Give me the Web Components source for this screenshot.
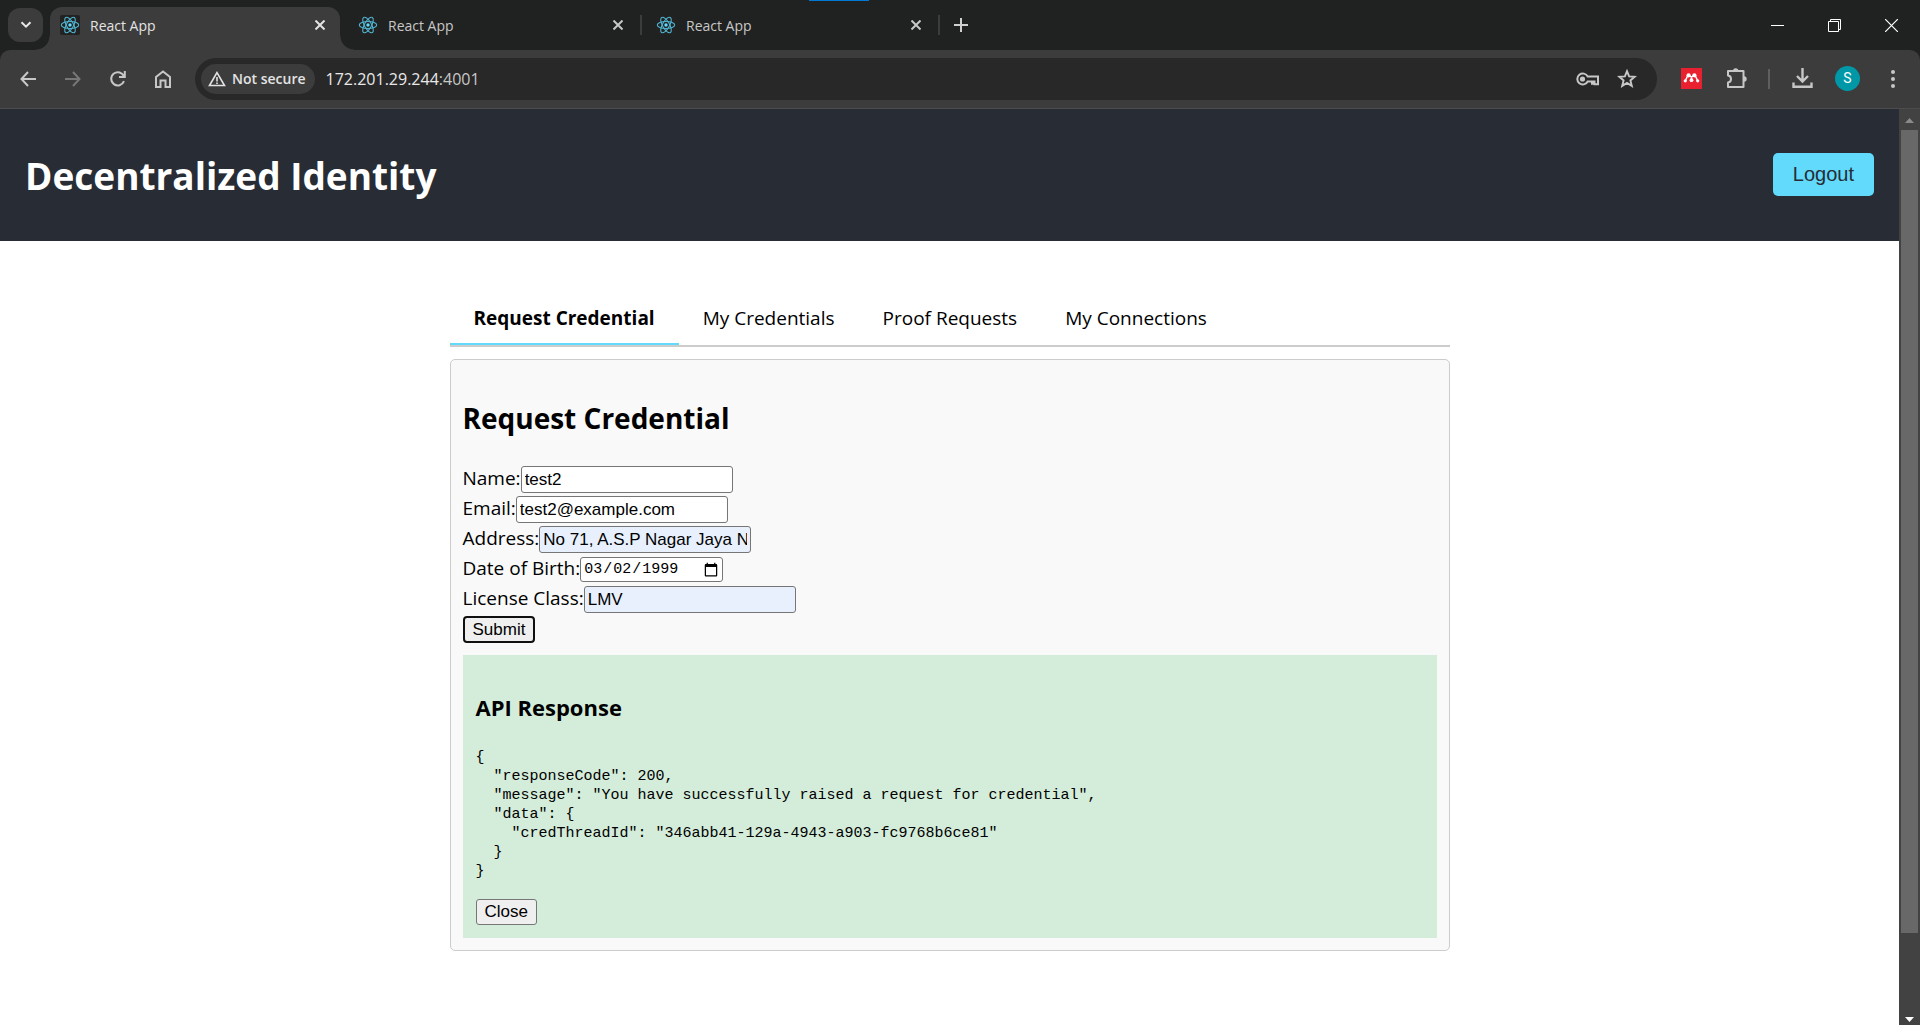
<!DOCTYPE html>
<html lang="en">
<head>
<meta charset="utf-8">
<title>React App</title>
<style>
  html, body { height: 100%; margin: 0; }
  body { background: #fff; font-family: "Open Sans", "Noto Sans", sans-serif; color: #000; }
</style>
</head>
<body>
<browser-window>
  <tab-strip slot="chrome">
    <browser-tab active>React App</browser-tab>
    <browser-tab>React App</browser-tab>
    <browser-tab>React App</browser-tab>
  </tab-strip>
  <browser-toolbar slot="chrome" host="172.201.29.244" port=":4001"></browser-toolbar>
  <site-header>Decentralized Identity</site-header>
  <site-main>
    <tab-bar>
      <tab-item active>Request Credential</tab-item>
      <tab-item>My Credentials</tab-item>
      <tab-item>Proof Requests</tab-item>
      <tab-item>My Connections</tab-item>
    </tab-bar>
    <content-panel heading="Request Credential">
      <credential-form>
        <form-field label="Name:" value="test2"></form-field>
        <form-field label="Email:" type="email" value="test2@example.com"></form-field>
        <form-field label="Address:" value="No 71, A.S.P Nagar Jaya Nagar" autofilled></form-field>
        <form-field label="Date of Birth:" type="date" value="1999-03-02"></form-field>
        <form-field label="License Class:" value="LMV" autofilled></form-field>
      </credential-form>
      <api-response heading="API Response">{
  "responseCode": 200,
  "message": "You have successfully raised a request for credential",
  "data": {
    "credThreadId": "346abb41-129a-4943-a903-fc9768b6ce81"
  }
}</api-response>
    </content-panel>
  </site-main>
</browser-window>

<script>
const define = (name, render) => customElements.define(name, class extends HTMLElement {
  constructor() {
    super();
    this.attachShadow({ mode: "open" });
  }
  connectedCallback() {
    this.shadowRoot.innerHTML = "<style>*{box-sizing:border-box}button{font:inherit;color:inherit;background:none;border:0;padding:0;margin:0}svg{display:block}</style>" + render(this);
  }
});

define("browser-window", () => `
  <style>
    :host { display: flex; flex-direction: column; height: 100vh; overflow: hidden; }
    .view { flex: 1; min-height: 0; display: flex; }
    .page { flex: 1; min-width: 0; overflow: hidden; background: #fff; }
  </style>
  <slot name="chrome"></slot>
  <div class="view"><div class="page"><slot></slot></div><scroll-bar></scroll-bar></div>`);

define("tab-strip", () => `
  <style>
    :host { display: flex; height: 50px; background: #202221; color: #c7c7c7; position: relative; }
    .search { align-self: center; width: 35px; height: 34px; margin: 0 7px 0 8px; border-radius: 12px; background: #3c3c3c; display: grid; place-items: center; }
    .new { width: 34px; display: grid; place-items: center; }
    .mark { position: absolute; top: 0; left: 809px; width: 60px; height: 1px; background: #0078d4; }
    .controls { margin-left: auto; display: flex; color: #fff; }
    .controls button { width: 57px; display: grid; place-items: center; }
  </style>
  <button class="search" aria-label="Search tabs"><svg width="12" height="8" viewBox="0 0 12 8" fill="none" stroke="#e8e8e8" stroke-width="2"><path d="M1.5 1.2 6 5.7l4.500-4.500"/></svg></button>
  <slot></slot>
  <button class="new" aria-label="New tab"><svg width="14" height="14" viewBox="0 0 14 14" stroke="#d0d0d0" stroke-width="2"><path d="M7 0v14M0 7h14"/></svg></button>
  <div class="mark"></div>
  <div class="controls">
    <button aria-label="Minimize"><svg width="13" height="13" viewBox="0 0 13 13" stroke="currentColor"><path d="M0 6.500h13"/></svg></button>
    <button aria-label="Restore"><svg width="13" height="13" viewBox="0 0 13 13" fill="none" stroke="currentColor"><path d="M.5 2.500h10v10H.5zM2.500 2.500V.5h10v10h-2"/></svg></button>
    <button aria-label="Close"><svg width="13" height="13" viewBox="0 0 13 13" stroke="currentColor" stroke-width="1.200"><path d="m0 0 13 13M13 0 0 13"/></svg></button>
  </div>`);

define("browser-tab", el => {
  const active = el.hasAttribute("active");
  return `
  <style>
    :host { display: flex; align-items: center; width: 298px; height: 50px; }
    .tab { position: relative; width: 290px; height: 43px; margin-top: 7px; padding: 0 15px 7px 10px; display: flex; align-items: center; gap: 10px; font-size: 14px; }
    .tab.active { background: #3c3c3c; color: #e3e3e3; border-radius: 12px 12px 0 0; }
    .active::before, .active::after { content: ""; position: absolute; bottom: 0; width: 14px; height: 14px; }
    .active::before { right: 100%; background: radial-gradient(circle at 0 0, transparent 13px, #3c3c3c 14px); }
    .active::after { left: 100%; background: radial-gradient(circle at 100% 0, transparent 13px, #3c3c3c 14px); }
    .icon { width: 20px; height: 20px; border-radius: 2px; background: #222; }
    .title { flex: 1; }
    .sep { width: 2px; height: 20px; margin-left: 2px; background: #3c3c3c; }
  </style>
  <div class="tab ${active ? "active" : ""}">
    <svg class="icon" viewBox="0 0 20 20" fill="none" stroke="#4fb4d0" stroke-width="1.100">
      <ellipse cx="10" cy="10" rx="8.700" ry="3.500"/><ellipse cx="10" cy="10" rx="8.700" ry="3.500" transform="rotate(60 10 10)"/><ellipse cx="10" cy="10" rx="8.700" ry="3.500" transform="rotate(120 10 10)"/><circle cx="10" cy="10" r="1.700" fill="#61dafb" stroke="none"/>
    </svg>
    <span class="title"><slot></slot></span>
    <button aria-label="Close tab"><svg width="10" height="10" viewBox="0 0 10 10" stroke="currentColor" stroke-width="2"><path d="m.5.5 9 9M9.500.5l-9 9"/></svg></button>
  </div>${active ? "" : '<div class="sep"></div>'}`;
});

define("browser-toolbar", el => `
  <style>
    :host { display: block; background: #202221; color: #c7c7c7; }
    .bar { display: flex; align-items: center; height: 59px; padding: 0 5px 1px; background: #3c3c3c; border-bottom: 1px solid #4b4c4b; border-radius: 10px 10px 0 0; }
    .nav { width: 45px; height: 42px; display: grid; place-items: center; }
    .dim { color: #777; }
    .omnibox { flex: 1; min-width: 0; height: 42px; margin: 0 12px 0 10px; padding: 0 20px 0 6px; border-radius: 21px; background: #282828; display: flex; align-items: center; }
    .chip { display: flex; align-items: center; gap: 6px; height: 30px; padding: 0 9px 0 7px; border-radius: 15px; background: #3c3c3c; color: #e3e3e3; font-size: 14px; font-weight: 600; white-space: nowrap; }
    .url { flex: 1; margin-left: 11px; font-size: 16px; color: #c7c7c7; }
    .url b { font-weight: 400; color: #e8e8e8; }
    .acts { display: flex; gap: 18px; align-items: center; }
    .ext { width: 45px; height: 42px; display: grid; place-items: center; }
    .sep { width: 2px; height: 20px; margin: 0 10px 0 9px; background: #5f5f5f; }
    .avatar { width: 25px; height: 25px; border-radius: 50%; background: #0097a7; color: #fff; font: 14px/25px Roboto, sans-serif; text-align: center; }
  </style>
  <div class="bar">
    <button class="nav" aria-label="Back"><svg width="16" height="16" viewBox="0 0 16 16" fill="none" stroke="currentColor" stroke-width="2"><path d="M8 1 1.500 8 8 15M1.500 8H16"/></svg></button>
    <button class="nav dim" aria-label="Forward"><svg width="16" height="16" viewBox="0 0 16 16" fill="none" stroke="currentColor" stroke-width="2"><path d="m8 1 6.500 7L8 15M14.500 8H0"/></svg></button>
    <button class="nav" aria-label="Reload"><svg width="16" height="16" viewBox="0 0 16 16" fill="none" stroke="currentColor" stroke-width="2"><path d="M14 10.200A6.600 6.600 0 1 1 14 5.500M14.800 0v6H9"/></svg></button>
    <button class="nav" aria-label="Home"><svg width="16" height="18" viewBox="0 0 16 18" fill="none" stroke="currentColor" stroke-width="2"><path d="M1 17V7l7-5.500L15 7v10h-4.500v-6.500h-5V17z"/></svg></button>
    <div class="omnibox">
      <span class="chip"><svg width="18" height="16" viewBox="0 0 18 16" fill="none" stroke="currentColor" stroke-width="1.600"><path d="M9 1.700 16.500 14.500H1.500zM9 6v4.500M9 11.500v1.600"/></svg>Not secure</span>
      <span class="url"><b>${el.getAttribute("host")}</b>${el.getAttribute("port")}</span>
      <span class="acts">
        <svg width="23" height="14" viewBox="0 0 23 14" fill="none" stroke="currentColor" stroke-width="2"><path d="M11.700 4.500A5.500 5.500 0 1 0 11.700 9.500H16v2.200h1.500V9.500h1v2.700h3.500V4.500z"/><circle cx="6.500" cy="7" r="2.600" fill="currentColor" stroke="none"/></svg>
        <svg width="20" height="19" viewBox="0 0 20 19" fill="none" stroke="currentColor" stroke-width="1.900"><path d="m10 2.200 2.100 5.200 5.600.4-4.300 3.600 1.400 5.500L10 13.900l-4.800 3 1.400-5.500L2.300 7.800l5.600-.4z"/></svg>
      </span>
    </div>
    <div class="ext"><svg width="21" height="21" viewBox="0 0 21 21"><path fill="#e9202f" d="M0 0h21v21H0z"/><path d="M4.300 12.500C5.500 11 5.500 9 7.300 7.500l3.200 1.500 3.200-1.500c1.800 1.500 1.800 3.500 3 5M10.500 8.500v3" fill="none" stroke="#fff" stroke-width="1.500"/><g fill="#fff"><circle cx="7.600" cy="7.300" r="2.100"/><circle cx="13.400" cy="7.300" r="2.100"/><circle cx="4.300" cy="12.800" r="1.600"/><circle cx="10.500" cy="12.200" r="1.900"/><circle cx="16.700" cy="12.800" r="1.600"/></g></svg></div>
    <button class="ext" aria-label="Extensions"><svg width="21" height="21" viewBox="0 0 21 21" fill="none" stroke="currentColor" stroke-width="2"><path d="M2 3h15.500v16H2v-4.500c4-.5 4-6.500 0-7z" stroke-linejoin="round"/><path fill="currentColor" stroke="none" d="M7 3a2.700 2.700 0 0 1 5.400 0zM18 8.300a2.700 2.700 0 0 1 0 5.400z"/></svg></button>
    <div class="sep"></div>
    <button class="ext" aria-label="Downloads"><svg width="21" height="21" viewBox="0 0 21 21" fill="none" stroke="currentColor" stroke-width="2.400"><path d="M10.500 0v13M5 8l5.500 5.500L16 8M1.500 14.500v4.200h18v-4.200"/></svg></button>
    <button class="ext" aria-label="Profile"><div class="avatar">S</div></button>
    <button class="ext" aria-label="Menu"><svg width="4" height="18" viewBox="0 0 4 18" fill="currentColor"><circle cx="2" cy="2" r="2"/><circle cx="2" cy="9" r="2"/><circle cx="2" cy="16" r="2"/></svg></button>
  </div>`);

define("scroll-bar", () => `
  <style>
    :host { display: flex; flex-direction: column; align-items: center; width: 21px; background: #424242; }
    .arrow { height: 21px; padding-top: 2px; display: grid; place-items: center; }
    .arrow.down { height: 13px; }
    .track { flex: 1; width: 17px; }
    .thumb { height: 91%; background: #686868; }
  </style>
  <div class="arrow"><svg width="9" height="5" viewBox="0 0 9 5"><path fill="#8a8a8a" d="M0 5 4.500 0 9 5z"/></svg></div>
  <div class="track"><div class="thumb"></div></div>
  <div class="arrow down"><svg width="9" height="5" viewBox="0 0 9 5"><path fill="#fff" d="m0 0 4.500 5L9 0z"/></svg></div>`);

define("site-header", () => `
  <style>
    :host { display: flex; justify-content: space-between; align-items: center; height: 132px; padding: 0 25px 2px; box-sizing: border-box; background: #282c34; color: #fff; }
    h1 { margin: 4px 0 0; font-size: 37px; line-height: 52px; }
    button { padding: 10px 20px; border-radius: 5px; background: #61dafb; color: #282c34; font: 20px/23px "Liberation Sans", sans-serif; }
  </style>
  <h1><slot></slot></h1><button type="button">Logout</button>`);

define("site-main", () => `
  <style>:host { display: block; max-width: 1000px; margin: 51px auto 0; }</style><slot></slot>`);

define("tab-bar", () => `
  <style>:host { display: flex; border-bottom: 2px solid #ccc; }</style><slot></slot>`);

define("tab-item", el => `
  <style>
    :host { display: block; }
    button { display: block; padding: 13px 24px 11px; border-bottom: 2px solid transparent; font-size: 19px; line-height: 27px; }
    .active { border-color: #61dafb; font-weight: 700; }
  </style>
  <button type="button" class="${el.hasAttribute("active") ? "active" : ""}"><slot></slot></button>`);

define("content-panel", el => `
  <style>
    :host { display: block; margin-top: 12px; padding: 12px; border: 1px solid #ccc; border-radius: 5px; background: #f9f9f9; }
    h2 { margin: 26px 0 28px; font-size: 28px; line-height: 40px; }
  </style>
  <h2>${el.getAttribute("heading")}</h2><slot></slot>`);

define("credential-form", () => `
  <style>
    form { display: flex; flex-direction: column; align-items: flex-start; gap: 3px; }
    :host { display: block; }
    button { height: 27px; padding: 0 8px; border: 2px solid #101010; border-radius: 4px; background: #efefef; font: 17px/20px "Liberation Sans", sans-serif; }
  </style>
  <form><slot></slot><button type="button">Submit</button></form>`);

define("form-field", el => `
  <style>
    :host { display: flex; align-items: center; height: 27px; }
    label { padding-bottom: 2px; font-size: 19px; line-height: 25px; }
    input { width: 212px; height: 27px; margin: 0; padding: 1px 3px; border: 1px solid #767676; border-radius: 3px; background: #fff; color: #000; font: 17px/20px "Liberation Sans", sans-serif; }
    input.auto { background: #e8f0fe; }
    input[type=date] { width: 143px; height: 25px; padding: 1px 2px 0; font: 15px/20px "Liberation Mono", monospace; }
    ::-webkit-calendar-picker-indicator { width: 16px; height: 16px; padding: 1px; margin: 0; }
  </style>
  <label for="f">${el.getAttribute("label")}</label><input id="f" type="${el.getAttribute("type") || "text"}" value="${el.getAttribute("value")}" class="${el.hasAttribute("autofilled") ? "auto" : ""}">`);

define("api-response", el => `
  <style>
    :host { display: block; margin-top: 12px; padding: 13px; background: #d4edda; }
    h3 { margin: 23px 0 25px; font-size: 22px; line-height: 32px; }
    pre { margin: 0 0 18px; font: 15px/19px "Liberation Mono", monospace; }
    button { display: block; height: 26px; padding: 0 8px; border: 1px solid #767676; border-radius: 3px; background: #efefef; font: 17px/20px "Liberation Sans", sans-serif; }
  </style>
  <h3>${el.getAttribute("heading")}</h3><pre><slot></slot></pre><button type="button">Close</button>`);
</script>
</body>
</html>
